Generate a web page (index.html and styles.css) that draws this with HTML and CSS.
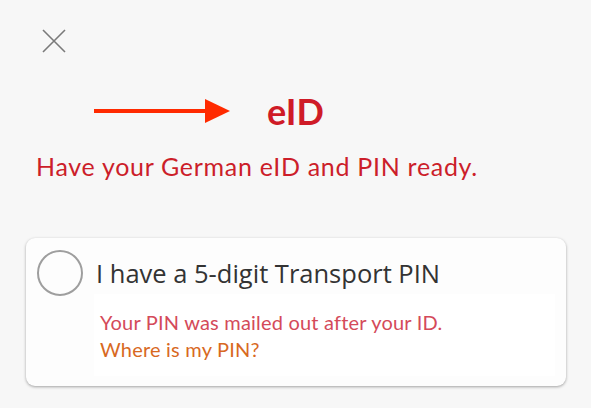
FILE: index.html
```html
<!DOCTYPE html>
<html>
<head>
<meta charset="utf-8">
<link rel="stylesheet" href="styles.css">
</head>
<body>
<div class="page">
  <div class="close">
    <svg width="24" height="24" viewBox="0 0 24 24"><path d="M1 1L23 23M23 1L1 23" stroke="#7a7a7a" stroke-width="1.6" fill="none"/></svg>
  </div>
  <div class="title-row">
    <svg class="arrow" width="137" height="24" viewBox="0 0 137 24"><path d="M0 12H114" stroke="#ff2a00" stroke-width="4"/><path d="M111 0L136 12L111 24Z" fill="#ff2a00"/></svg>
    <h1 class="title">eID</h1>
  </div>
  <p class="subtitle">Have your German eID and PIN ready.</p>
  <div class="card">
    <div class="option">
      <span class="radio"></span>
      <span class="label">I have a 5-digit Transport PIN</span>
    </div>
    <div class="desc">
      <div class="desc-text">Your PIN was mailed out after your ID.</div>
      <div class="desc-link">Where is my PIN?</div>
    </div>
  </div>
</div>
</body>
</html>
```
FILE: styles.css
```css
html, body {
  margin: 0;
  padding: 0;
  background: #f7f7f7;
  width: 591px;
  height: 408px;
  overflow: hidden;
}
.page {
  font-family: "Lato", "Noto Sans", sans-serif;
  display: flex;
  flex-direction: column;
  padding: 29px 25px 0 26px;
}
.close {
  margin-left: 16px;
  height: 24px;
}
.title-row {
  display: flex;
  align-items: center;
  margin-top: 40px;
  margin-left: 68px;
  height: 36px;
}
.arrow {
  display: block;
}
.title {
  margin: 0 0 0 36px;
  font-size: 36px;
  font-weight: 700;
  color: #cf1b27;
  line-height: 36px;
}
.subtitle {
  margin: 22px 0 0 10px;
  font-size: 25px;
  letter-spacing: 0.7px;
  color: #cc1e2a;
  line-height: 30px;
}
.card {
  margin-top: 57px;
  background: #fdfdfd;
  border-radius: 9px;
  box-shadow: 0 1px 3px rgba(0,0,0,0.35);
  padding: 12px 11px 10px 11px;
  height: 148px;
  box-sizing: border-box;
}
.option {
  display: flex;
  align-items: center;
  gap: 13px;
}
.radio {
  width: 42px;
  height: 42px;
  border: 2px solid #9e9e9e;
  border-radius: 50%;
  flex: none;
}
.label {
  font-family: "Open Sans", "Noto Sans", sans-serif;
  font-size: 25.5px;
  color: #333;
}
.desc {
  background: #fff;
  margin: -2px 0 0 57px;
  padding: 15px 6px 13px 6px;
}
.desc-text {
  font-size: 20px;
  letter-spacing: 0.2px;
  color: #d44a5a;
  line-height: 27px;
}
.desc-link {
  font-size: 20px;
  letter-spacing: 0.2px;
  color: #d8691f;
  line-height: 27px;
}
```
